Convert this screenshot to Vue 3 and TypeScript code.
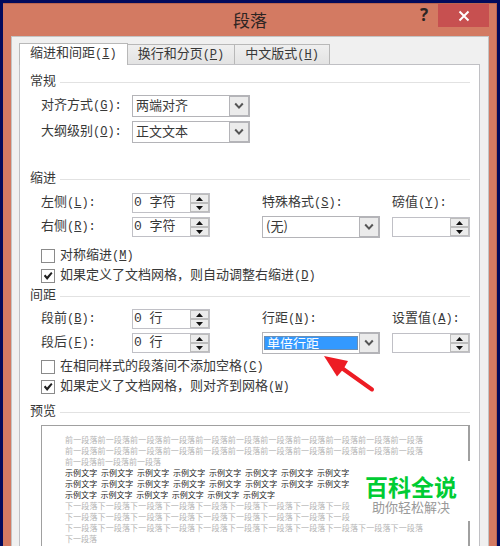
<script setup lang="ts">
import { ref } from 'vue'

interface Tab {
  text: string
  hotkey: string
}

const tabs: Tab[] = [
  { text: '缩进和间距', hotkey: 'I' },
  { text: '换行和分页', hotkey: 'P' },
  { text: '中文版式', hotkey: 'H' },
]
const activeTab = ref(0)

const alignment = ref('两端对齐')
const outline = ref('正文文本')
const special = ref('(无)')
const lineSpacing = ref('单倍行距')

const left = ref('0 字符')
const right = ref('0 字符')
const before = ref('0 行')
const after = ref('0 行')
const points = ref('')
const setting = ref('')

const mirror = ref(false)
const autoAdjust = ref(true)
const noSpace = ref(false)
const snapToGrid = ref(true)

const previousText = '前一段落'.repeat(25)
const sampleText = Array(26).fill('示例文字').join('\u00a0 ')
const nextText = '下一段落'.repeat(34)
</script>

<template>
  <div class="desktop">
    <main class="dialog">
      <header class="titlebar">
        <h1>段落</h1>
        <button class="help" type="button">?</button>
        <button class="close" type="button" aria-label="关闭">
          <svg width="12" height="12" viewBox="0 0 12 12"><path d="M1.5 1.5 10.5 10.5M10.5 1.5 1.5 10.5" /></svg>
        </button>
      </header>

      <div class="body">
        <nav class="tabs">
          <button
            v-for="(tab, i) in tabs"
            :key="tab.hotkey"
            type="button"
            class="tab"
            :class="{ active: i === activeTab }"
            @click="activeTab = i"
          >{{ tab.text }}<span class="key">(<u>{{ tab.hotkey }}</u>)</span></button>
        </nav>

        <div class="panel">
          <section class="general">
            <h2>常规</h2>
            <div class="fields">
              <label for="alignment">对齐方式<span class="key">(<u>G</u>):</span></label>
              <div class="combo">
                <select id="alignment" v-model="alignment"><option>两端对齐</option></select>
                <span class="drop"><svg width="10" height="8" viewBox="0 0 10 8"><path d="M1.2 1.5 5 5.6 8.8 1.5" /></svg></span>
              </div>
            </div>
            <div class="fields">
              <label for="outline">大纲级别<span class="key">(<u>O</u>):</span></label>
              <div class="combo">
                <select id="outline" v-model="outline"><option>正文文本</option></select>
                <span class="drop"><svg width="10" height="8" viewBox="0 0 10 8"><path d="M1.2 1.5 5 5.6 8.8 1.5" /></svg></span>
              </div>
            </div>
          </section>

          <section class="measures">
            <h2>缩进</h2>
            <div class="fields">
              <label for="left">左侧<span class="key">(<u>L</u>):</span></label>
              <div class="spinner">
                <input id="left" v-model="left" type="text" />
                <div class="steps">
                  <button type="button" aria-label="增加"><svg width="7" height="4" viewBox="0 0 7 4"><path d="M0 4 3.5 0 7 4Z" /></svg></button>
                  <button type="button" aria-label="减少"><svg width="7" height="4" viewBox="0 0 7 4"><path d="M0 0 3.5 4 7 0Z" /></svg></button>
                </div>
              </div>
              <label for="special">特殊格式<span class="key">(<u>S</u>):</span></label>
              <label for="points">磅值<span class="key">(<u>Y</u>):</span></label>

              <label for="right">右侧<span class="key">(<u>R</u>):</span></label>
              <div class="spinner">
                <input id="right" v-model="right" type="text" />
                <div class="steps">
                  <button type="button" aria-label="增加"><svg width="7" height="4" viewBox="0 0 7 4"><path d="M0 4 3.5 0 7 4Z" /></svg></button>
                  <button type="button" aria-label="减少"><svg width="7" height="4" viewBox="0 0 7 4"><path d="M0 0 3.5 4 7 0Z" /></svg></button>
                </div>
              </div>
              <div class="combo">
                <select id="special" v-model="special"><option>(无)</option></select>
                <span class="drop"><svg width="10" height="8" viewBox="0 0 10 8"><path d="M1.2 1.5 5 5.6 8.8 1.5" /></svg></span>
              </div>
              <div class="spinner wide">
                <input id="points" v-model="points" type="text" />
                <div class="steps">
                  <button type="button" aria-label="增加"><svg width="7" height="4" viewBox="0 0 7 4"><path d="M0 4 3.5 0 7 4Z" /></svg></button>
                  <button type="button" aria-label="减少"><svg width="7" height="4" viewBox="0 0 7 4"><path d="M0 0 3.5 4 7 0Z" /></svg></button>
                </div>
              </div>
            </div>
            <div class="checks first">
              <label><input v-model="mirror" type="checkbox" /><span>对称缩进<span class="key">(<u>M</u>)</span></span></label>
              <label><input v-model="autoAdjust" type="checkbox" /><span>如果定义了文档网格，则自动调整右缩进<span class="key">(<u>D</u>)</span></span></label>
            </div>
          </section>

          <section class="measures">
            <h2>间距</h2>
            <div class="fields">
              <label for="before">段前<span class="key">(<u>B</u>):</span></label>
              <div class="spinner">
                <input id="before" v-model="before" type="text" />
                <div class="steps">
                  <button type="button" aria-label="增加"><svg width="7" height="4" viewBox="0 0 7 4"><path d="M0 4 3.5 0 7 4Z" /></svg></button>
                  <button type="button" aria-label="减少"><svg width="7" height="4" viewBox="0 0 7 4"><path d="M0 0 3.5 4 7 0Z" /></svg></button>
                </div>
              </div>
              <label for="line-spacing">行距<span class="key">(<u>N</u>):</span></label>
              <label for="setting">设置值<span class="key">(<u>A</u>):</span></label>

              <label for="after">段后<span class="key">(<u>F</u>):</span></label>
              <div class="spinner">
                <input id="after" v-model="after" type="text" />
                <div class="steps">
                  <button type="button" aria-label="增加"><svg width="7" height="4" viewBox="0 0 7 4"><path d="M0 4 3.5 0 7 4Z" /></svg></button>
                  <button type="button" aria-label="减少"><svg width="7" height="4" viewBox="0 0 7 4"><path d="M0 0 3.5 4 7 0Z" /></svg></button>
                </div>
              </div>
              <div class="combo focused">
                <select id="line-spacing" v-model="lineSpacing"><option>单倍行距</option></select>
                <span class="drop"><svg width="10" height="8" viewBox="0 0 10 8"><path d="M1.2 1.5 5 5.6 8.8 1.5" /></svg></span>
                <svg class="pointer" width="52" height="40" viewBox="0 0 52 40">
                  <path class="head" d="M1 1 25 6 20.500 14 14 21.500Z" />
                  <path class="shaft" d="M16 11 49 34.500" />
                </svg>
              </div>
              <div class="spinner wide">
                <input id="setting" v-model="setting" type="text" />
                <div class="steps">
                  <button type="button" aria-label="增加"><svg width="7" height="4" viewBox="0 0 7 4"><path d="M0 4 3.5 0 7 4Z" /></svg></button>
                  <button type="button" aria-label="减少"><svg width="7" height="4" viewBox="0 0 7 4"><path d="M0 0 3.5 4 7 0Z" /></svg></button>
                </div>
              </div>
            </div>
            <div class="checks">
              <label><input v-model="noSpace" type="checkbox" /><span>在相同样式的段落间不添加空格<span class="key">(<u>C</u>)</span></span></label>
              <label><input v-model="snapToGrid" type="checkbox" /><span>如果定义了文档网格，则对齐到网格<span class="key">(<u>W</u>)</span></span></label>
            </div>
          </section>

          <section class="preview-section">
            <h2>预览</h2>
            <div class="preview">
              <p>{{ previousText }}</p>
              <p class="sample">{{ sampleText }}</p>
              <p>{{ nextText }}</p>
              <aside class="badge">
                <strong>百科全说</strong>
                <span>助你轻松解决</span>
              </aside>
            </div>
          </section>
        </div>
      </div>
    </main>
  </div>
</template>

<style>
body {
  margin: 0;
  background: #020a5c;
}
</style>

<style scoped>
* {
  box-sizing: border-box;
}
.desktop {
  display: flex;
  min-height: 100vh;
  padding: 3px 3px 0;
  background: #020a5c;
  color: #383838;
  font: 13px/18px "Liberation Mono", "Noto Sans CJK SC", monospace;
}
button,
input,
select {
  margin: 0;
  padding: 0;
  border: 0;
  border-radius: 0;
  color: inherit;
  font: inherit;
}
.dialog {
  flex: 1;
  min-width: 0;
  display: flex;
  flex-direction: column;
  padding: 0 7px 0 8px;
  border: 1px solid #b9644f;
  border-width: 1px 1px 0 0;
  background: #d37a62;
}
.titlebar {
  display: flex;
  justify-content: flex-end;
  align-items: flex-start;
  height: 32px;
}
h1 {
  flex: 1;
  margin: 0;
  padding-left: 79px;
  color: #2e2523;
  font: 17px/32px "Noto Sans CJK SC", sans-serif;
  text-align: center;
}
.help {
  width: 28px;
  height: 22px;
  background: none;
  color: #2b2523;
  font: bold 17px/22px "Noto Sans", sans-serif;
}
.close {
  display: grid;
  place-items: center;
  width: 51px;
  height: 23px;
  background: #c75050;
}
.close path {
  fill: none;
  stroke: #fff;
  stroke-width: 2;
}
.body {
  flex: 1;
  display: flex;
  flex-direction: column;
  padding: 6px 8px 0 7px;
  border: 1px solid #c4c4c4;
  border-bottom: 0;
  background: #f0f0f0;
}
.tabs {
  display: flex;
  align-items: flex-end;
}
.tab {
  height: 20px;
  padding: 0 10px;
  border: 1px solid #b8b8b8;
  border-width: 1px 1px 0 0;
  background: linear-gradient(#efefef, #e3e3e3);
  line-height: 19px;
}
.tab.active {
  position: relative;
  height: 22px;
  margin-bottom: -1px;
  padding-bottom: 1px;
  border-left-width: 1px;
  background: #fff;
  line-height: 20px;
}
.key {
  font-size: 12px;
}
.key u {
  text-underline-offset: 1px;
}
.panel {
  flex: 1;
  display: flex;
  flex-direction: column;
  padding: 8px 9px 0 10px;
  border: 1px solid #c0c0c4;
  border-bottom: 0;
  background: #fff;
}
h2 {
  display: flex;
  align-items: center;
  gap: 4px;
  margin: 0;
  font: inherit;
}
h2::after {
  content: "";
  flex: 1;
  height: 1px;
  background: #e2e2e2;
}
.general {
  padding-bottom: 27px;
}
.fields {
  display: grid;
  grid-template-columns: 79px minmax(0, 118fr) minmax(0, 118fr) minmax(0, 78fr);
  grid-auto-rows: 22px;
  align-items: center;
  gap: 2px 12px;
  margin-top: 4px;
  padding-left: 11px;
}
.fields label {
  white-space: nowrap;
}
.combo {
  position: relative;
  display: flex;
  height: 22px;
  border: 1px solid #b4b4b8;
  background: #fff;
}
.combo select {
  flex: 1;
  min-width: 0;
  padding: 0 0 2px 3px;
  background: #fff;
  appearance: none;
  font-family: "Noto Sans CJK SC", sans-serif;
  line-height: 18px;
}
.drop {
  display: grid;
  place-items: center;
  width: 20px;
  border: 1px solid #b4b4b8;
  background: #ebebeb;
  pointer-events: none;
}
.drop path {
  fill: none;
  stroke: #555;
  stroke-width: 2;
}
.combo.focused select {
  margin: 3px 1px;
  padding: 0 0 0 3px;
  outline: 1px solid #6c8fb4;
  outline-offset: -1px;
  background: #3399ff;
  color: #fff;
  line-height: 14px;
}
.spinner {
  display: flex;
  width: 66%;
  height: 20px;
  border: 1px solid #c0c0c6;
  background: #fff;
}
.spinner.wide {
  width: 100%;
}
.spinner input {
  flex: 1;
  min-width: 0;
  padding-left: 1px;
  background: #fff;
}
.steps {
  display: flex;
  flex-direction: column;
  width: 19px;
}
.steps button {
  flex: 1;
  display: grid;
  place-items: center;
  border: 1px solid #bdbdbd;
  background: #ececec;
}
.steps path {
  fill: #111;
}
.checks {
  display: flex;
  flex-direction: column;
  margin-top: 3px;
  padding: 0 0 6px 11px;
}
.checks.first {
  margin-top: 8px;
  padding-bottom: 1px;
}
.checks label {
  display: flex;
  align-items: center;
  gap: 5px;
  height: 20px;
}
.checks input {
  width: 14px;
  height: 14px;
  border: 1px solid #8a8a8a;
  background: #fff;
  appearance: none;
}
.checks input:checked::before {
  content: "";
  display: block;
  width: 12px;
  height: 12px;
  background: #222;
  clip-path: polygon(15% 50%, 28% 38%, 42% 54%, 76% 16%, 88% 28%, 43% 84%);
}
.measures + .measures .fields {
  margin-top: 3px;
}
.preview-section {
  flex: 1;
  display: flex;
  flex-direction: column;
}
.preview {
  position: relative;
  flex: 1;
  margin: 4px 0 0 11px;
  padding: 8px 45px 0 23px;
  border: 1px solid #a0a0a0;
  border-width: 1px 2px 0 1px;
  color: #b4b4b4;
  font: 8px/11px "Noto Sans CJK SC", sans-serif;
}
.preview p {
  margin: 0;
  text-align: justify;
}
.preview .sample {
  color: #222;
  word-break: keep-all;
}
.badge {
  position: absolute;
  top: 35px;
  right: -4px;
  display: flex;
  flex-direction: column;
  align-items: center;
  width: 122px;
  height: 60px;
  padding-top: 12px;
  background: #fff;
  color: #999;
  font-size: 13px;
  line-height: 16px;
}
.badge strong {
  color: #00cc33;
  font-size: 23px;
  line-height: 26px;
}
.pointer {
  position: absolute;
  top: 22px;
  left: 60px;
  pointer-events: none;
}
.pointer .head {
  fill: #ed1c24;
}
.pointer .shaft {
  fill: none;
  stroke: #ed1c24;
  stroke-width: 4;
  stroke-linecap: round;
}
</style>
